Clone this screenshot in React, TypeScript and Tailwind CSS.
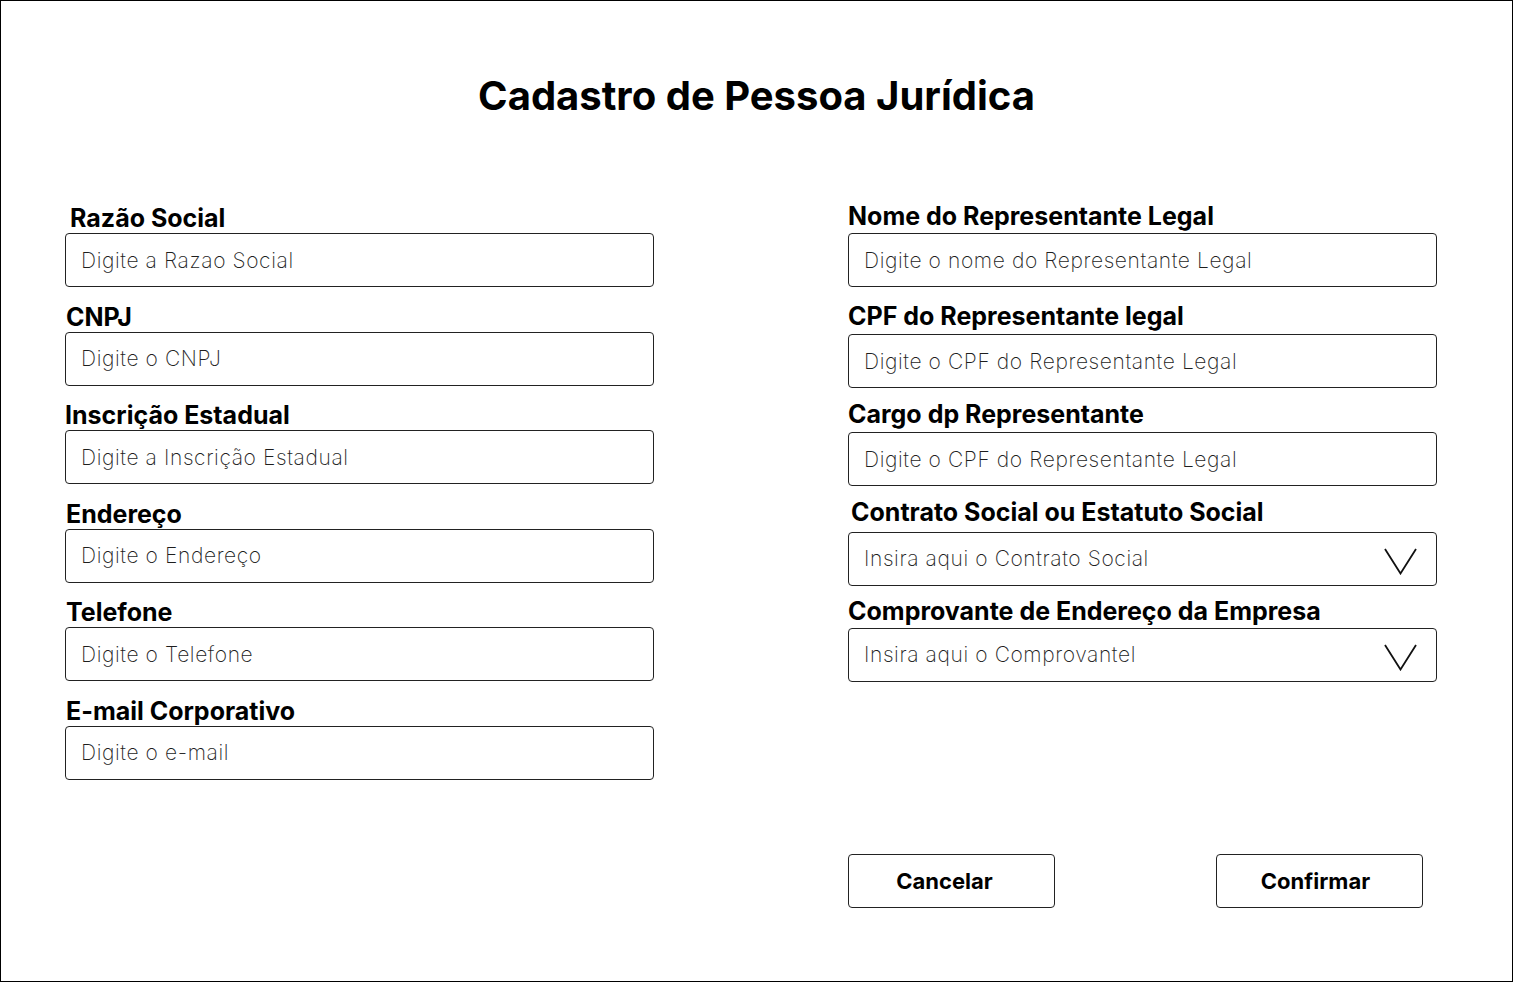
import React from "react"

const leftFields = [
  { label: "Razão Social", placeholder: "Digite a Razao Social", indent: "pl-[5px]" },
  { label: "CNPJ", placeholder: "Digite o CNPJ", indent: "pl-[1px]" },
  { label: "Inscrição Estadual", placeholder: "Digite a Inscrição Estadual", indent: "" },
  { label: "Endereço", placeholder: "Digite o Endereço", indent: "pl-[1px]" },
  { label: "Telefone", placeholder: "Digite o Telefone", indent: "pl-[1px]" },
  { label: "E-mail Corporativo", placeholder: "Digite o e-mail", indent: "pl-[1px]" },
]

function Chevron() {
  return (
    <svg width="33" height="27" viewBox="0 0 33 27" fill="none" className="shrink-0">
      <polyline points="1,1 16.5,25.5 32,1" stroke="#111" strokeWidth="1.8" strokeLinejoin="miter" />
    </svg>
  )
}

function Field({ label, placeholder, indent = "", gap = "mt-px" }: { label: string; placeholder: string; indent?: string; gap?: string }) {
  return (
    <div className="flex flex-col">
      <label className={`text-[25px] leading-[28px] font-bold text-black ${indent}`}>{label}</label>
      <input
        placeholder={placeholder}
        className={`${gap} h-[54px] w-full rounded-[4px] border border-[#222] px-[15px] text-[21px] leading-[26px] font-extralight tracking-[0.6px] text-black outline-none placeholder:text-[#1e1e1e]`}
      />
    </div>
  )
}

function UploadField({ label, placeholder, indent = "", gap = "mt-px" }: { label: string; placeholder: string; indent?: string; gap?: string }) {
  return (
    <div className="flex flex-col">
      <span className={`text-[25px] leading-[28px] font-bold text-black ${indent}`}>{label}</span>
      <button
        type="button"
        className={`${gap} flex h-[54px] w-full items-center justify-between rounded-[4px] border border-[#222] pl-[15px] pr-[19px] text-left`}
      >
        <span className="text-[21px] font-extralight tracking-[0.6px] text-[#1e1e1e]">{placeholder}</span>
        <span className="pt-[4px]">
          <Chevron />
        </span>
      </button>
    </div>
  )
}

export default function App() {
  return (
    <div className="h-[982px] w-[1513px] border border-black bg-white font-['Inter','Liberation_Sans',sans-serif] text-black">
      <h1 className="pt-[72px] text-center text-[40px] leading-[46px] font-bold tracking-[0px]">
        Cadastro de Pessoa Jurídica
      </h1>

      <div className="mt-[83px] grid grid-cols-[589px_589px] gap-x-[194px] pl-[64px]">
        {/* Left column */}
        <div className="mt-[2px] flex flex-col gap-[15.6px]">
          {leftFields.map((f) => (
            <Field key={f.label} label={f.label} placeholder={f.placeholder} indent={f.indent} />
          ))}
        </div>

        {/* Right column */}
        <div className="flex flex-col">
          <Field label="Nome do Representante Legal" placeholder="Digite o nome do Representante Legal" gap="mt-[3px]" />
          <div className="mt-[15px]">
            <Field label="CPF do Representante legal" placeholder="Digite o CPF do Representante Legal" gap="mt-[4px]" />
          </div>
          <div className="mt-[12px]">
            <Field label="Cargo dp Representante" placeholder="Digite o CPF do Representante Legal" gap="mt-[4px]" />
          </div>
          <div className="mt-[12px]">
            <UploadField label="Contrato Social ou Estatuto Social" placeholder="Insira aqui o Contrato Social" indent="pl-[3px]" gap="mt-[6px]" />
          </div>
          <div className="mt-[11px]">
            <UploadField label="Comprovante de Endereço da Empresa" placeholder="Insira aqui o Comprovantel" gap="mt-[3px]" />
          </div>

          <div className="mt-[172px] flex gap-[161px]">
            <button type="button" className="h-[54px] w-[207px] rounded-[4px] border border-[#222] pr-[14px] text-[22px] font-bold">
              Cancelar
            </button>
            <button type="button" className="h-[54px] w-[207px] rounded-[4px] border border-[#222] pr-[8px] text-[22px] font-bold">
              Confirmar
            </button>
          </div>
        </div>
      </div>
    </div>
  )
}
